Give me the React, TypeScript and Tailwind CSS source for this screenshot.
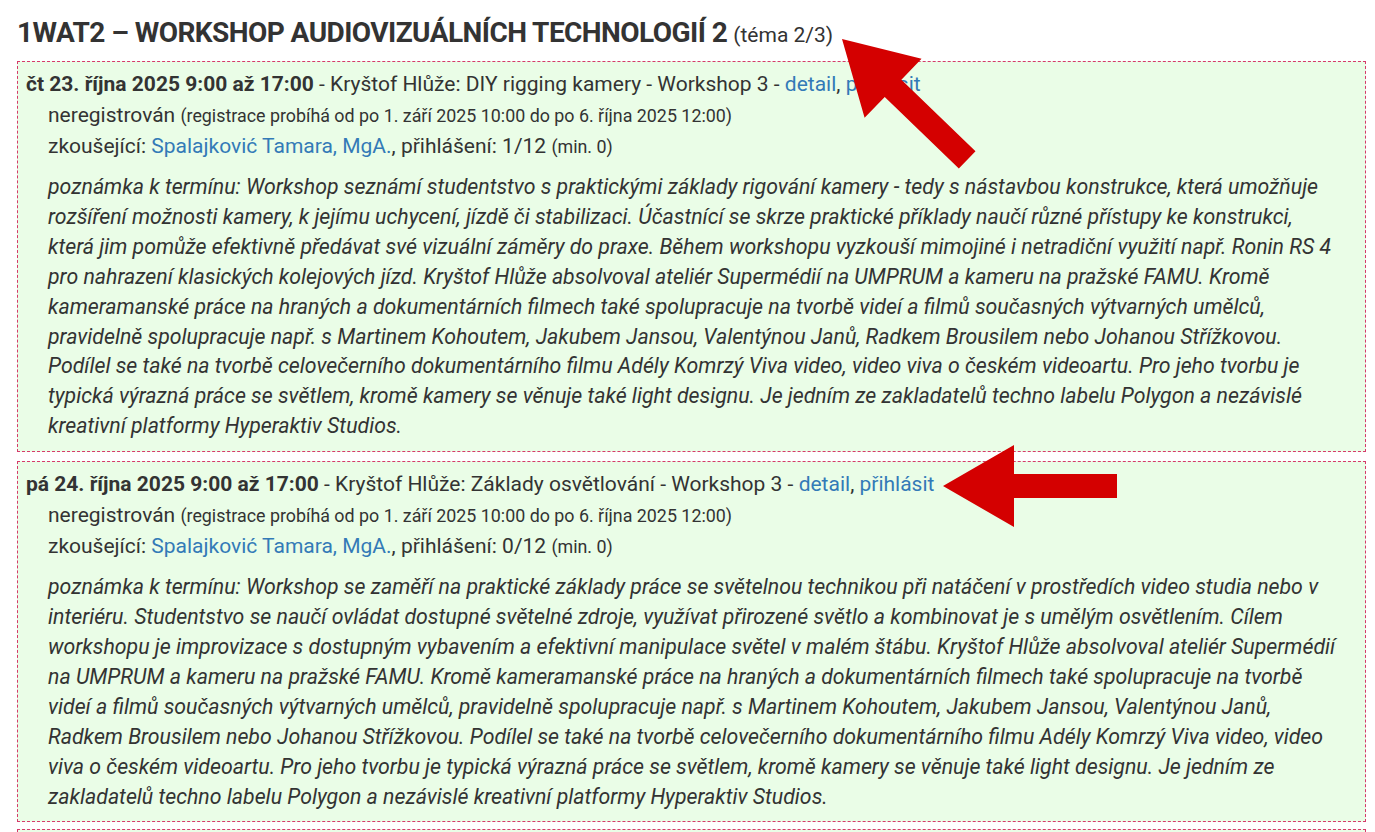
import React from "react";

type Term = {
  date: string;
  title: string;
  signed: string;
  note: string[];
};

const terms: Term[] = [
  {
    date: "čt 23. října 2025 9:00 až 17:00",
    title: "Kryštof Hlůže: DIY rigging kamery - Workshop 3",
    signed: "1/12",
    note: [
      "poznámka k termínu: Workshop seznámí studentstvo s praktickými základy rigování kamery - tedy s nástavbou konstrukce, která umožňuje",
      "rozšíření možnosti kamery, k jejímu uchycení, jízdě či stabilizaci. Účastnící se skrze praktické příklady naučí různé přístupy ke konstrukci,",
      "která jim pomůže efektivně předávat své vizuální záměry do praxe. Během workshopu vyzkouší mimojiné i netradiční využití např. Ronin RS 4",
      "pro nahrazení klasických kolejových jízd. Kryštof Hlůže absolvoval ateliér Supermédií na UMPRUM a kameru na pražské FAMU. Kromě",
      "kameramanské práce na hraných a dokumentárních filmech také spolupracuje na tvorbě videí a filmů současných výtvarných umělců,",
      "pravidelně spolupracuje např. s Martinem Kohoutem, Jakubem Jansou, Valentýnou Janů, Radkem Brousilem nebo Johanou Střížkovou.",
      "Podílel se také na tvorbě celovečerního dokumentárního filmu Adély Komrzý Viva video, video viva o českém videoartu. Pro jeho tvorbu je",
      "typická výrazná práce se světlem, kromě kamery se věnuje také light designu. Je jedním ze zakladatelů techno labelu Polygon a nezávislé",
      "kreativní platformy Hyperaktiv Studios.",
    ],
  },
  {
    date: "pá 24. října 2025 9:00 až 17:00",
    title: "Kryštof Hlůže: Základy osvětlování - Workshop 3",
    signed: "0/12",
    note: [
      "poznámka k termínu: Workshop se zaměří na praktické základy práce se světelnou technikou při natáčení v prostředích video studia nebo v",
      "interiéru. Studentstvo se naučí ovládat dostupné světelné zdroje, využívat přirozené světlo a kombinovat je s umělým osvětlením. Cílem",
      "workshopu je improvizace s dostupným vybavením a efektivní manipulace světel v malém štábu. Kryštof Hlůže absolvoval ateliér Supermédií",
      "na UMPRUM a kameru na pražské FAMU. Kromě kameramanské práce na hraných a dokumentárních filmech také spolupracuje na tvorbě",
      "videí a filmů současných výtvarných umělců, pravidelně spolupracuje např. s Martinem Kohoutem, Jakubem Jansou, Valentýnou Janů,",
      "Radkem Brousilem nebo Johanou Střížkovou. Podílel se také na tvorbě celovečerního dokumentárního filmu Adély Komrzý Viva video, video",
      "viva o českém videoartu. Pro jeho tvorbu je typická výrazná práce se světlem, kromě kamery se věnuje také light designu. Je jedním ze",
      "zakladatelů techno labelu Polygon a nezávislé kreativní platformy Hyperaktiv Studios.",
    ],
  },
];

// arrow pointing left from its tip at 0,0
const ARROW = "0,0 71,-41 71,-12 174,-12 174,12 71,12 71,41";

function TermBox({ term }: { term: Term }) {
  return (
    <div className="mb-[9px] border border-dashed border-[#d63a6a] bg-[#eafde7] pl-2 pr-[9px] pt-[7px] pb-[10px]">
      <div className="leading-[31px]">
        <b className="font-bold">{term.date}</b> - {term.title} -{" "}
        <a className="text-[#337ab7]">detail</a>,{" "}
        <a className="text-[#337ab7]">přihlásit</a>
      </div>
      <div className="pl-[22px]">
        <div className="leading-[31px]">
          neregistrován{" "}
          <span className="text-[17.85px]">
            (registrace probíhá od po 1. září 2025 10:00 do po 6. října 2025 12:00)
          </span>
        </div>
        <div className="leading-[31px]">
          zkoušející: <a className="text-[#337ab7]">Spalajković Tamara, MgA.</a>,
          přihlášení: {term.signed}{" "}
          <span className="text-[17.85px]">(min. 0)</span>
        </div>
        <p className="mt-[10px] text-[21.3px] italic leading-[29.9px]">
          {term.note.map((line) => (
            <span key={line} className="block whitespace-nowrap">
              {line}
            </span>
          ))}
        </p>
      </div>
    </div>
  );
}

export default function App() {
  return (
    <div
      className="relative h-[832px] overflow-hidden bg-white pl-[17px] pr-[9px] text-[21px] text-[#333]"
      style={{ fontFamily: "Roboto, 'Liberation Sans', sans-serif" }}
    >
      <h2 className="flex items-baseline gap-[6px] pt-[14px] pb-[7px] leading-[38px]">
        <span className="text-[28px] font-bold tracking-[-0.55px] text-[#333]">
          1WAT2 – WORKSHOP AUDIOVIZUÁLNÍCH TECHNOLOGIÍ 2
        </span>
        <span className="text-[21px] font-normal">(téma 2/3)</span>
      </h2>
      {terms.map((t) => (
        <TermBox key={t.date} term={t} />
      ))}
      <div className="-mt-[2px] h-[40px] border border-dashed border-[#d63a6a] bg-[#eafde7]" />

      <svg
        className="pointer-events-none absolute left-0 top-0"
        width="1375"
        height="832"
        viewBox="0 0 1375 832"
      >
        <g transform="translate(842 39) rotate(44)">
          <polygon points={ARROW} fill="#d40000" />
        </g>
        <g transform="translate(943 486)">
          <polygon points={ARROW} fill="#d40000" />
        </g>
      </svg>
    </div>
  );
}
